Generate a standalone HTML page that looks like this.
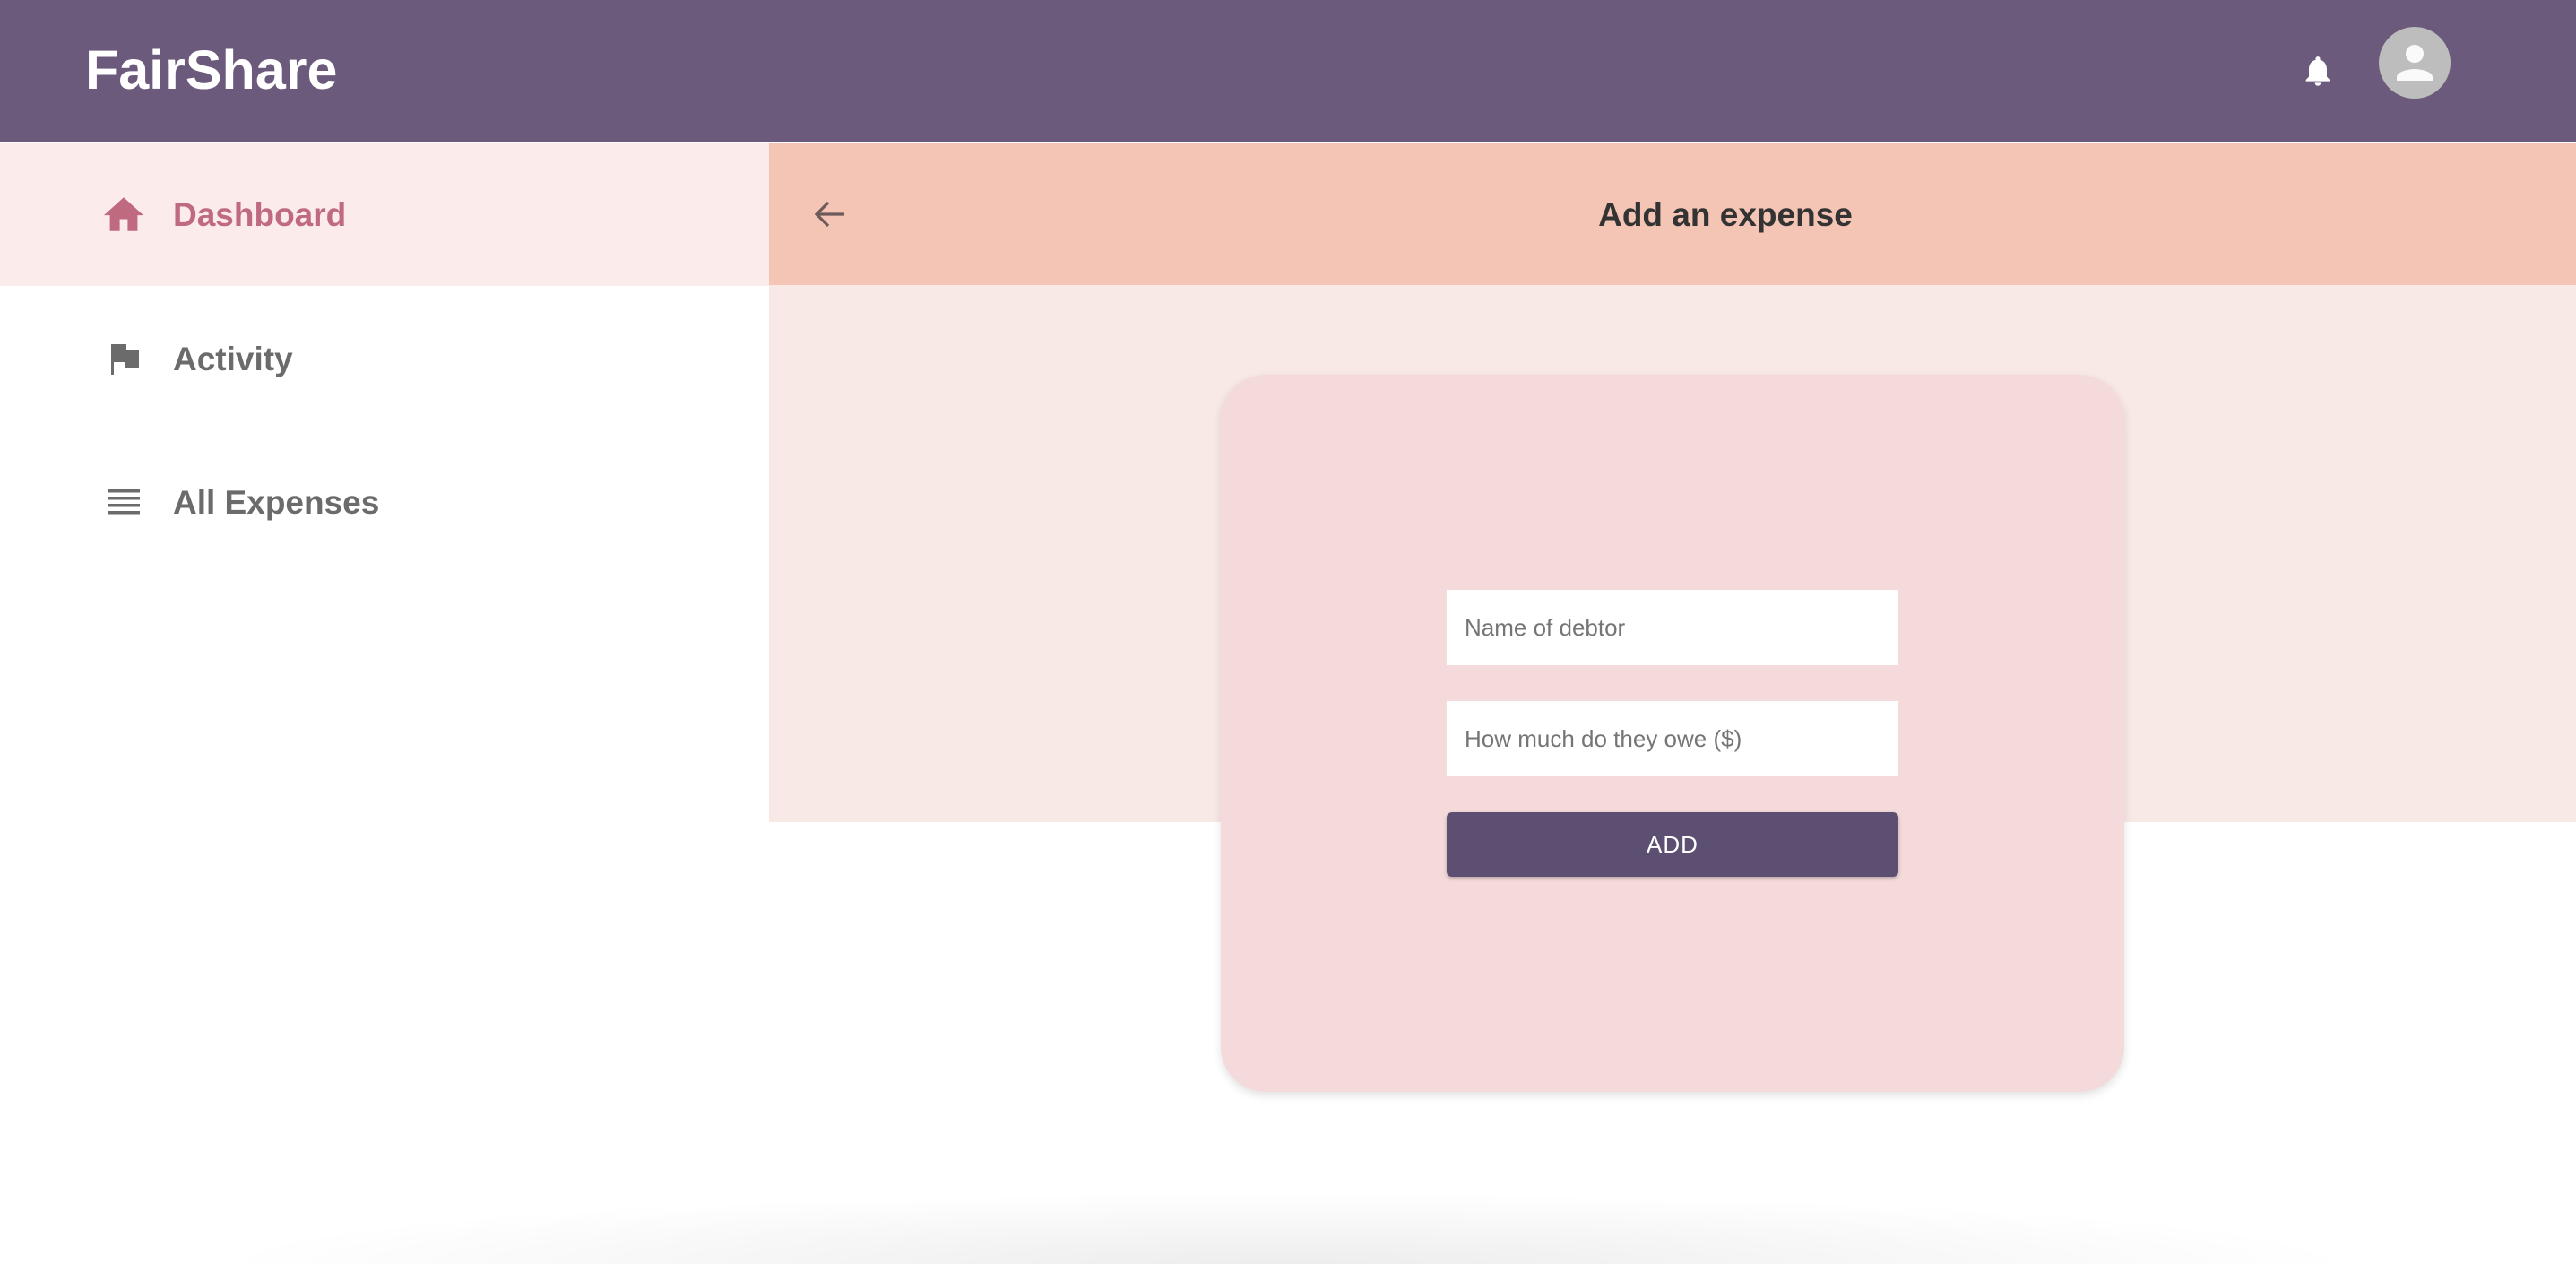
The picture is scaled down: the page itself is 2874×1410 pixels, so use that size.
<!DOCTYPE html>
<html><head><meta charset="utf-8"><style>
*{margin:0;padding:0;box-sizing:border-box}
html,body{width:2874px;height:1410px;overflow:hidden}
body{background:#fff;font-family:"Liberation Sans",sans-serif}
#w{position:relative;width:2874px;height:1410px;overflow:hidden}
.hdr{position:absolute;left:0;top:0;width:2874px;height:158px;background:#6b5a7b}
.logo{position:absolute;left:95px;top:38px;font-size:61px;font-weight:bold;color:#fff;line-height:80px}
.side-act{position:absolute;left:0;top:160px;width:858px;height:159px;background:#fcebeb}
.item{position:absolute;left:193px;font-size:37px;font-weight:bold;color:#6b6b6b;line-height:44px}
.mh{position:absolute;left:858px;top:160px;width:2016px;height:158px;background:#f4c4b4}
.mh .t{position:absolute;left:0;right:0;top:58px;text-align:center;font-size:37px;font-weight:bold;color:#333;line-height:44px;padding-left:118px}
.pale{position:absolute;left:858px;top:318px;width:2016px;height:599px;background:#f9e9e6}
.card{position:absolute;left:1362px;top:418px;width:1008px;height:800px;background:#f5dadb;border-radius:50px;box-shadow:0 4px 10px rgba(0,0,0,.12)}
.inp{position:absolute;left:1614px;width:504px;height:84px;background:#fff;color:#757575;font-size:26px;line-height:84px;padding-left:20px}
.btn{position:absolute;left:1614px;top:906px;width:504px;height:72px;background:#5c4f72;border-radius:6px;color:#fff;font-size:26px;line-height:72px;text-align:center;letter-spacing:1px;box-shadow:0 2px 4px rgba(0,0,0,.25)}
.bot{position:absolute;left:240px;top:1330px;width:2390px;height:80px;background:radial-gradient(ellipse 50% 100% at 50% 100%,rgba(0,0,0,.07),rgba(0,0,0,0))}
</style></head><body><div id="w">
<div class="hdr"><div class="logo">FairShare</div>
<svg style="position:absolute;left:2566px;top:57px" width="40" height="44" viewBox="0 0 24 24"><path fill="#fff" d="M12 22c1.1 0 2-.9 2-2h-4c0 1.1.9 2 2 2zm6-6v-5c0-3.07-1.64-5.64-4.5-6.32V4c0-.83-.67-1.5-1.5-1.5s-1.5.67-1.5 1.5v.68C7.63 5.36 6 7.92 6 11v5l-2 2v1h16v-1l-2-2z"/></svg>
<svg style="position:absolute;left:2654px;top:30px" width="80" height="80" viewBox="0 0 80 80"><circle cx="40" cy="40" r="40" fill="#bdbdbd"/><circle cx="40" cy="30" r="10" fill="#fafafa"/><path fill="#fafafa" d="M20 60v-4c0-6 13-9 20-9s20 3 20 9v4z"/></svg>
</div>
<div class="side-act"></div>
<svg style="position:absolute;left:116px;top:220px" width="44" height="38" viewBox="2 3 20 17"><path fill="#c06a80" d="M10 20v-6h4v6h5v-8h3L12 3 2 12h3v8z"/></svg>
<div class="item" style="top:218px;color:#c06a80">Dashboard</div>
<svg style="position:absolute;left:124px;top:384px" width="31" height="34" viewBox="0 0 31 34"><rect x="0" y="0" width="3" height="34" fill="#6b6b6b"/><path fill="#6b6b6b" d="M3 0h14v6h14v20H15v-6H3z"/></svg>
<div class="item" style="top:379px">Activity</div>
<svg style="position:absolute;left:120px;top:546px" width="36" height="28" viewBox="0 0 36 28"><g fill="#6b6b6b"><rect y="0" width="36" height="3.5"/><rect y="8" width="36" height="3.5"/><rect y="16" width="36" height="3.5"/><rect y="24" width="36" height="3.5"/></g></svg>
<div class="item" style="top:539px">All Expenses</div>
<div class="mh"><svg style="position:absolute;left:50px;top:64px" width="36" height="30" viewBox="0 0 36 30"><path d="M34 15H4M16 2L3 15l13 13" stroke="#6e5a5a" stroke-width="3.2" fill="none"/></svg><div class="t">Add an expense</div></div>
<div class="pale"></div>
<div class="card"></div>
<div class="inp" style="top:658px">Name of debtor</div>
<div class="inp" style="top:782px">How much do they owe ($)</div>
<div class="btn">ADD</div>
<div class="bot"></div>
</div></body></html>
